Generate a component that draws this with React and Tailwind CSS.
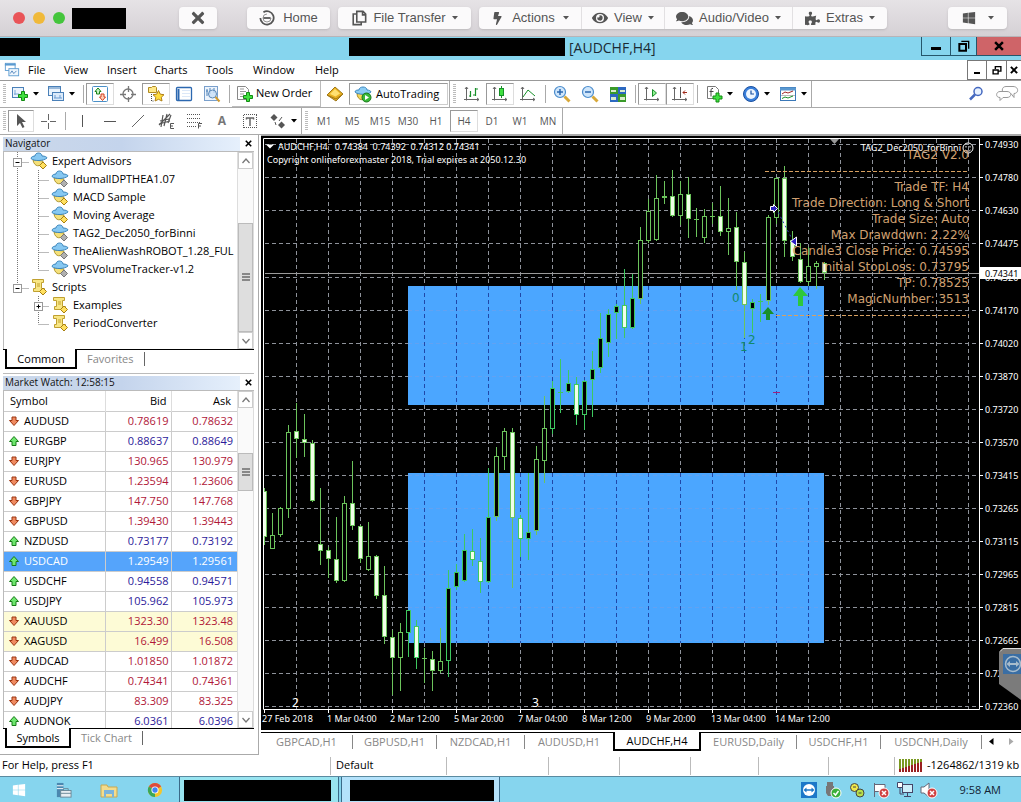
import { FaTimes, FaBolt, FaEye, FaComments, FaPuzzlePiece, FaWindows } from 'react-icons/fa'

// [body top, body bottom, high, low, direction], one every 8px
const CANDLES = [
  [491, 537, 488, 545, 'd'], [535, 549, 513, 549, 'u'], [508, 535, 507, 537, 'u'], [432, 509, 425, 518, 'u'],
  [431, 439, 403, 458, 'd'], [439, 443, 414, 457, 'd'], [443, 501, 440, 502, 'd'], [544, 551, 488, 565, 'd'],
  [550, 559, 547, 578, 'd'], [559, 581, 517, 583, 'd'], [503, 581, 496, 582, 'u'], [503, 526, 461, 530, 'd'],
  [526, 559, 525, 563, 'd'], [556, 570, 522, 571, 'u'], [556, 596, 555, 599, 'd'], [595, 637, 566, 644, 'd'],
  [637, 658, 630, 695, 'd'], [632, 658, 623, 691, 'u'], [610, 633, 610, 657, 'u'], [626, 658, 620, 669, 'd'],
  [658, 659, 648, 683, 'x'], [659, 671, 651, 691, 'd'], [661, 671, 628, 673, 'u'], [588, 661, 570, 677, 'u'],
  [572, 587, 564, 590, 'u'], [550, 581, 534, 582, 'u'], [551, 560, 529, 566, 'd'], [561, 582, 538, 593, 'd'],
  [517, 582, 468, 583, 'u'], [456, 517, 447, 521, 'u'], [431, 457, 428, 470, 'u'], [432, 518, 428, 588, 'd'],
  [518, 539, 515, 557, 'd'], [532, 539, 473, 560, 'u'], [459, 531, 446, 535, 'u'], [428, 461, 396, 483, 'u'],
  [388, 429, 381, 434, 'u'], [392, 394, 359, 413, 'x'], [383, 392, 370, 393, 'u'], [384, 415, 377, 425, 'd'],
  [381, 415, 380, 430, 'u'], [369, 380, 351, 417, 'u'], [338, 368, 313, 373, 'u'], [314, 343, 309, 357, 'u'],
  [306, 313, 304, 339, 'u'], [305, 328, 269, 338, 'd'], [298, 328, 274, 329, 'u'], [240, 299, 227, 304, 'u'],
  [211, 241, 199, 243, 'u'], [198, 240, 175, 241, 'u'], [196, 198, 181, 204, 'u'], [196, 216, 170, 217, 'd'],
  [194, 216, 181, 225, 'u'], [194, 219, 177, 238, 'd'], [219, 220, 208, 237, 'x'], [216, 238, 209, 243, 'u'],
  [216, 217, 203, 224, 'x'], [216, 232, 186, 236, 'd'], [228, 232, 198, 255, 'u'], [227, 262, 212, 290, 'd'],
  [262, 305, 252, 338, 'd'], [302, 309, 299, 333, 'u'], [301, 302, 294, 322, 'x'], [217, 301, 215, 305, 'u'],
  [178, 218, 177, 224, 'u'], [178, 241, 166, 257, 'd'], [240, 257, 231, 261, 'd'], [259, 282, 243, 283, 'd'],
  [266, 282, 247, 286, 'u'], [263, 267, 261, 289, 'u'], [263, 273, 262, 280, 'd'],
]

const PRICES = [
  [144, '0.74930'], [177, '0.74780'], [210, '0.74630'], [243, '0.74475'], [277, '0.74320'], [310, '0.74170'],
  [343, '0.74020'], [376, '0.73870'], [409, '0.73720'], [442, '0.73570'], [475, '0.73415'], [508, '0.73265'],
  [541, '0.73115'], [574, '0.72965'], [607, '0.72815'], [640, '0.72665'], [673, '0.72515'], [706, '0.72360'],
]

const DATES = [
  [262, '27 Feb 2018'], [327, '1 Mar 04:00'], [390, '2 Mar 12:00'], [454, '5 Mar 20:00'], [518, '7 Mar 04:00'],
  [582, '8 Mar 12:00'], [646, '9 Mar 20:00'], [711, '13 Mar 04:00'], [775, '14 Mar 12:00'],
]

const INFO = [
  [159, 'TAG2 V2.0'], [191, 'Trade TF: H4'], [207, 'Trade Direction: Long & Short'], [223, 'Trade Size: Auto'],
  [239, 'Max Drawdown: 2.22%'], [255, 'Candle3 Close Price: 0.74595'], [271, 'Initial StopLoss: 0.73795'],
  [287, 'TP: 0.78525'], [303, 'MagicNumber: 3513'],
]

const QUOTES = [
  ['AUDUSD', '0.78619', '0.78632', 'down'], ['EURGBP', '0.88637', '0.88649', 'up'],
  ['EURJPY', '130.965', '130.979', 'down'], ['EURUSD', '1.23594', '1.23606', 'down'],
  ['GBPJPY', '147.750', '147.768', 'down'], ['GBPUSD', '1.39430', '1.39443', 'down'],
  ['NZDUSD', '0.73177', '0.73192', 'up'], ['USDCAD', '1.29549', '1.29561', 'up'],
  ['USDCHF', '0.94558', '0.94571', 'up'], ['USDJPY', '105.962', '105.973', 'up'],
  ['XAUUSD', '1323.30', '1323.48', 'down'], ['XAGUSD', '16.499', '16.508', 'down'],
  ['AUDCAD', '1.01850', '1.01872', 'down'], ['AUDCHF', '0.74341', '0.74361', 'down'],
  ['AUDJPY', '83.309', '83.325', 'down'], ['AUDNOK', '6.0361', '6.0396', 'up'],
]

const TREE = [
  { label: 'Expert Advisors', level: 0, icon: 'ea', box: '-', first: true },
  { label: 'IdumallDPTHEA1.07', level: 1, icon: 'ea', gray: true, outer: true },
  { label: 'MACD Sample', level: 1, icon: 'ea', outer: true },
  { label: 'Moving Average', level: 1, icon: 'ea', outer: true },
  { label: 'TAG2_Dec2050_forBinni', level: 1, icon: 'ea', gray: true, outer: true },
  { label: 'TheAlienWashROBOT_1.28_FUL', level: 1, icon: 'ea', gray: true, outer: true },
  { label: 'VPSVolumeTracker-v1.2', level: 1, icon: 'ea', gray: true, outer: true, last: true },
  { label: 'Scripts', level: 0, icon: 'script', box: '-', last: true },
  { label: 'Examples', level: 1, icon: 'script', box: '+' },
  { label: 'PeriodConverter', level: 1, icon: 'script', last: true },
]

const Svg = ({ s = 18, children }) => (
  <svg width={s} height={s} viewBox="0 0 18 18" fill="none" className="shrink-0" aria-hidden="true">{children}</svg>
)

const Plus = ({ x, y }) => (
  <path transform={`translate(${x} ${y})`} d="M3.500 .5h3v3h3v3h-3v3h-3v-3h-3v-3h3z" fill="#3fe03f" stroke="#128a12" />
)

const Caret = () => (
  <svg width="6" height="4" viewBox="0 0 6 4" className="shrink-0" aria-hidden="true"><path d="M0 0h6L3 3.500z" fill="currentColor" /></svg>
)

const AxisBase = () => <path d="M3.500 2v13.500M1 14.500h15M2 4l1.500-2L5 4M14 13l2 1.500L14 16" stroke="#666" />

const ICONS = {
  newChart: <><rect x="1.500" y="2.500" width="11" height="10" fill="#eaf3fc" stroke="#4a80b8" /><path d="M4 5v5M3 9h5" stroke="#7aa8d8" /><Plus x={7} y={6} /></>,
  profiles: <><rect x="1.500" y="1.500" width="12" height="9" fill="#eaf3fc" stroke="#4a80b8" /><path d="M1 3h13" stroke="#4a80b8" /><rect x="5.500" y="7.500" width="11" height="8" fill="#dbeafa" stroke="#4a80b8" /><path d="M7 13h8M8 10v3M13 10v3" stroke="#6b9bd0" /></>,
  market: <><rect x="1.500" y="1.500" width="15" height="15" rx="1" fill="#fff" stroke="#4a90c8" /><path d="M7 3l3 3.500H8.500V9h-3V6.500H4z" fill="#c8f5c8" stroke="#168016" /><path d="M11.500 15.500l-3-3.500H10V9h3v3h1.500z" fill="#ffd0b8" stroke="#d04020" /></>,
  cross: <><circle cx="9" cy="9" r="5" stroke="#777" strokeWidth="1.300" /><path d="M9.500 1v6M9.500 12v5M1 9.500h6M12 9.500h5" stroke="#777" strokeWidth="1.300" /></>,
  star: <><path d="M1.500 2.500h3l1-1h3l1 1v5h-8z" fill="#ffe98a" stroke="#b08a20" /><path d="M4.500 9v7h3" stroke="#444" strokeDasharray="1 1" /><path d="M11.500 5.500l1.800 3.700 3.700.5-2.700 2.600.7 3.700-3.500-1.700-3.400 1.700.7-3.700L6 9.700l3.700-.5z" fill="#ffdc3c" stroke="#b08018" /></>,
  terminal: <><rect x="1.500" y="2.500" width="15" height="13" rx="1" fill="#fff" stroke="#2c68b0" strokeWidth="1.300" /><path d="M3.500 4v11" stroke="#2c68b0" strokeWidth="2" /><path d="M7 5.500h8M7 8.500h8M7 11.500h8" stroke="#dce8f8" /></>,
  tester: <><rect x="1.500" y="1.500" width="13" height="14" fill="#edf4fc" stroke="#7aa0cc" /><path d="M4 4v7M3 6h2M7 3v6M11 3v5" stroke="#4a80b8" /><circle cx="9.500" cy="9" r="4" fill="#c8e0f8cc" stroke="#5a88b8" /><path d="M12.500 12l4 4.500" stroke="#d09a30" strokeWidth="2" /></>,
  order: <><path d="M1.500 1.500h8l3 3v10h-11z" fill="#fff" stroke="#888" /><path d="M4 4h4M4 6.500h6M4 9h4M4 11.500h3" stroke="#999" /><Plus x={7} y={7} /></>,
  meta: <><path d="M1 10l8-8 8 7-7 7z" fill="#e8b020" stroke="#a07818" /><path d="M1 10l9 4 7-5" stroke="#a07818" /><path d="M4 9l5-5 5 4.500-4.500 3z" fill="#ffe070" /></>,
  auto: <><path d="M3 8c0 8 8 9 10 2z" fill="#f5d85a" stroke="#a88820" /><path d="M1 7c0-2 3-2 4-2 0-4 8-4 8 0 2 0 4 1 4 2-3 3-13 3-16 0z" fill="#8accf4" stroke="#3c88c0" /><circle cx="12.500" cy="12.500" r="4.500" fill="#38b838" stroke="#187818" /><path d="M11 10l4 2.500-4 2.500z" fill="#fff" /></>,
  bars: <><AxisBase /><path d="M7.500 6v6M7.500 11H6M12.500 3v8M12.500 4H15M12.500 10H10" stroke="#18902a" strokeWidth="1.200" /></>,
  candle: <><AxisBase /><path d="M10.500 1v12" stroke="#18902a" /><rect x="8.500" y="3.500" width="4" height="7" fill="#40e040" stroke="#18902a" /></>,
  line: <><AxisBase /><path d="M4 12l5-7 7 6" stroke="#18902a" /></>,
  zoomIn: <><path d="M11.500 11.500l5 5" stroke="#d8a838" strokeWidth="3" /><circle cx="7" cy="7" r="5.500" fill="#cfe6fb" stroke="#4a8ccc" strokeWidth="1.200" /><path d="M7 4v6M4 7h6" stroke="#2c68b0" strokeWidth="1.500" /></>,
  zoomOut: <><path d="M11.500 11.500l5 5" stroke="#d8a838" strokeWidth="3" /><circle cx="7" cy="7" r="5.500" fill="#cfe6fb" stroke="#4a8ccc" strokeWidth="1.200" /><path d="M4 7h6" stroke="#2c68b0" strokeWidth="1.500" /></>,
  tile: <><path d="M1 2h8v7H1z" fill="#3a9a2a" /><path d="M9 2h8v7H9z" fill="#2c68c0" /><path d="M1 9h8v8H1z" fill="#2c68c0" /><path d="M9 9h8v8H9z" fill="#3a9a2a" /><path d="M2 5h5v2H2zM11 5h5v2h-5zM2 12h5v3H2zM11 12h5v3h-5z" fill="#d8eccc" /></>,
  scroll: <><AxisBase /><path d="M9.500 4.500l4 3.500-4 3.500z" fill="#90f090" stroke="#18902a" /></>,
  shift: <><AxisBase /><path d="M9.500 2v11" stroke="#555" /><path d="M16 7.500h-4M14 5.500l-2 2 2 2" stroke="#a02818" /></>,
  indicator: <><path d="M2.500 1.500h8l3 3v9h-11z" fill="#fff" stroke="#777" /><path d="M8 3.500c-2-.5-2 1-2 3v5M4.500 6.500h4" stroke="#444" /><Plus x={7.500} y={7.500} /></>,
  clock: <><circle cx="9" cy="9" r="7.500" fill="#3a80dc" stroke="#1a50a0" /><circle cx="9" cy="9" r="5" fill="#eef6ff" /><path d="M9 5.500V9h3" stroke="#1a50a0" strokeWidth="1.200" /></>,
  template: <><rect x="1.500" y="2.500" width="15" height="13" fill="#fff" stroke="#3a78b8" /><path d="M1 4h16" stroke="#5a98d0" strokeWidth="3" /><path d="M3 9l3-2 3 1 5-2" stroke="#a02828" /><path d="M2 10.500h14" stroke="#bbb" /><path d="M3 13.500l3-1.500 3 1 5-2" stroke="#18902a" /></>,
  cursor: <path d="M5 2v12l3-3 2.500 5 2-1-2.500-5h4z" fill="#555" />,
  plus: <path d="M9.500 2v6M9.500 11v6M2 9.500h6M11 9.500h6" stroke="#666" />,
  vline: <path d="M9.500 3v12" stroke="#555" />,
  hline: <path d="M3 9.500h12" stroke="#555" />,
  diag: <path d="M3 15L15 3" stroke="#666" />,
  channel: <><path d="M2 13L13 2M3 9l9-2M2 12l11-3M6 3L4 15M10 2L7 14M14 3l-3 8" stroke="#555" strokeWidth="1.200" /><path d="M17 11.500h-3.500v5H17M13.500 14H16" stroke="#555" /></>,
  fibo: <><path d="M2 2.500h14M2 6.500h14M2 10.500h14M2 14.500h9" stroke="#555" strokeDasharray="1 1" /><path d="M17 11.500h-3.500v5M13.500 14H16" stroke="#555" /></>,
  textBox: <><path d="M3 2.500h13M3 15.500h13M2.500 3v13M15.500 3v13" stroke="#555" strokeDasharray="1 1" /><path d="M5 6h8M9 6v8M5.500 5.500v2M12.500 5.500v2" stroke="#666" strokeWidth="1.500" /></>,
  shapes: <><path d="M5 2L1.500 5.500 5 9l3.500-3.500z" fill="#555" /><path d="M12.500 9.500L9 13l3.500 3.500L16 13z" fill="#555" /><path d="M10 9l3-4M6 10l1 3" stroke="#555" /></>,
  search: <><circle cx="11" cy="6.500" r="4" fill="#e8f2ff" stroke="#4468c0" strokeWidth="1.500" /><path d="M8 9.500l-5 5" stroke="#4468c0" strokeWidth="2.500" /></>,
}

const Grip = () => (
  <span className="flex w-2 shrink-0 items-center justify-center">
    <svg width="3" height="20" viewBox="0 0 3 20" aria-hidden="true"><path d="M1.500 0v20" stroke="#bbb" strokeWidth="3" strokeDasharray="1 1" /></svg>
  </span>
)

const Sep = () => <span className="my-1 ml-[3px] mr-0.5 w-px shrink-0 bg-[#aaa]" />

const Tool = ({ icon, label, on, caret, className = 'w-7' }) => (
  <button
    type="button"
    aria-label={label}
    className={`flex shrink-0 items-center justify-center gap-1 border ${on ? 'my-0.5 border-[#999] border-r-[#ddd] border-b-[#ddd]' : 'border-transparent'} ${className}`}
  >
    <Svg>{ICONS[icon]}</Svg>
    {caret && <Caret />}
  </button>
)

const MacBar = () => (
  <header className="flex h-[37px] items-center border-b border-[#b8b4b8] bg-gradient-to-b from-[#e6e3e6] to-[#d5d1d5] font-['Liberation_Sans',sans-serif] text-[13px] text-[#555]">
    <div className="ml-[13px] flex items-center gap-2">
      <span className="size-3 rounded-full bg-[#e95458]" />
      <span className="size-3 rounded-full bg-[#f0b93a]" />
      <span className="size-3 rounded-full bg-[#44c53c]" />
      <span className="-ml-px h-[21px] w-[54px] bg-black" />
    </div>
    <button type="button" aria-label="Close session" className="ml-[53px] flex h-[22px] w-[38px] items-center justify-center rounded bg-[#fbfafb] shadow-sm"><FaTimes size={18} /></button>
    <button type="button" className="ml-[30px] flex h-[22px] w-[83px] items-center justify-center gap-2 rounded bg-[#fbfafb] shadow-sm">
      <Svg s={16}><path d="M5 2.500A7.500 7.500 0 1 1 1.500 9" stroke="#555" strokeWidth="2" /><path d="M9 4.500a4.500 4.500 0 1 0 4.500 4.500" stroke="#888" /><path d="M5 9h8" stroke="#555" strokeWidth="2" /></Svg>
      Home
    </button>
    <button type="button" className="ml-2 flex h-[22px] w-[133px] items-center justify-center gap-1.5 rounded bg-[#fbfafb] shadow-sm">
      <Svg s={16}><path d="M6.500 1.500h7l3 3v9h-10z M13 1.500v4h3.500M6 4.500H2.500v12h9v-3" stroke="#555" strokeWidth="1.800" /></Svg>
      File Transfer <Caret />
    </button>
    <div className="ml-2 flex h-[22px] rounded bg-[#fbfafb] shadow-sm">
      <button type="button" className="flex w-[102px] items-center justify-center gap-2"><FaBolt size={13} />Actions <Caret /></button>
      <button type="button" className="flex w-[83px] items-center justify-center gap-1.5 border-l border-[#e2e0e2]"><FaEye size={16} />View <Caret /></button>
      <button type="button" className="flex w-[128px] items-center justify-center gap-1.5 border-l border-[#e2e0e2]"><FaComments size={17} />Audio/Video <Caret /></button>
      <button type="button" className="flex w-[95px] items-center justify-center gap-1.5 border-l border-[#e2e0e2]"><FaPuzzlePiece size={15} />Extras <Caret /></button>
    </div>
    <button type="button" aria-label="Windows keys" className="ml-auto mr-3.5 flex h-[22px] w-[59px] items-center justify-center gap-3 rounded bg-[#fbfafb] shadow-sm"><FaWindows size={14} /><Caret /></button>
  </header>
)

const TitleBar = () => (
  <div className="flex h-[23px] bg-[#86d5ee]">
    <span className="mt-px h-[18px] w-10 bg-black" />
    <div className="flex flex-1 items-start pl-[309px]">
      <span className="mt-px h-[18px] w-[216px] bg-black" />
      <h1 className="ml-1 mt-px text-sm leading-5 text-[#1a2a33]">[AUDCHF,H4]</h1>
    </div>
    <div className="flex h-[19px] border-b border-l border-[#25566b]">
      <button type="button" aria-label="Minimize" className="flex w-7 items-center justify-center"><span className="mt-1 h-[3px] w-2.5 bg-black" /></button>
      <button type="button" aria-label="Restore" className="flex w-[26px] items-center justify-center border-l border-[#25566b]">
        <Svg s={12}><path d="M2 6h10v10H2z" stroke="#000" strokeWidth="3" /><path d="M5 2h11v11" stroke="#000" strokeWidth="2" /></Svg>
      </button>
      <button type="button" aria-label="Close" className="flex w-[45px] items-center justify-center border-l border-[#25566b] bg-[#cf6468]">
        <Svg s={10}><path d="M2 2l14 14M16 2L2 16" stroke="#000" strokeWidth="4.500" /></Svg>
      </button>
    </div>
  </div>
)

const MenuBar = () => (
  <nav className="flex h-[21px] items-center border-b border-[#999] bg-white pl-1">
    <Svg s={16}><rect x="1.500" y="1.500" width="11" height="8" fill="#fff" stroke="#5a9ad0" /><path d="M1 3h12" stroke="#5a9ad0" strokeWidth="2" /><rect x="5.500" y="7.500" width="11" height="8" fill="#eef6fd" stroke="#5a9ad0" /><path d="M7 13l2-3 2 3 3-3" stroke="#4a80b8" /></Svg>
    <div className="flex flex-1 text-[11px] leading-5">
      <a href="#file" className="w-[44px] pl-2">File</a>
      <a href="#view" className="w-[43px]">View</a>
      <a href="#insert" className="w-[47px]">Insert</a>
      <a href="#charts" className="w-[52px]">Charts</a>
      <a href="#tools" className="w-[47px]">Tools</a>
      <a href="#window" className="w-[62px]">Window</a>
      <a href="#help">Help</a>
    </div>
    <div className="flex h-full">
      <button type="button" aria-label="Minimize chart" className="flex w-5 items-center justify-center border border-[#777]"><span className="mt-1.5 h-0.5 w-1.5 bg-black" /></button>
      <button type="button" aria-label="Restore chart" className="flex w-5 items-center justify-center border-y border-r border-[#777]">
        <Svg s={10}><path d="M2 9h9v7H2zM6 7V3h10v8h-4" stroke="#000" strokeWidth="2.500" /></Svg>
      </button>
      <button type="button" aria-label="Close chart" className="flex w-[14px] items-center justify-center border-y border-[#777]">
        <Svg s={8}><path d="M2 2l14 14M16 2L2 16" stroke="#000" strokeWidth="4.500" /></Svg>
      </button>
    </div>
  </nav>
)

const MainToolbar = () => (
  <div className="flex h-[27px] border-b border-[#aaa] bg-white">
    <Grip />
    <Tool icon="newChart" label="New chart" caret className="w-[34px]" />
    <Tool icon="profiles" label="Profiles" caret className="w-[38px]" />
    <Sep />
    <Tool icon="market" label="Market Watch" on />
    <Tool icon="cross" label="Data Window" />
    <Tool icon="star" label="Navigator" on />
    <Tool icon="terminal" label="Terminal" />
    <Tool icon="tester" label="Strategy Tester" />
    <Sep />
    <button type="button" className="flex w-[89px] shrink-0 items-center gap-0.5 border-r border-b border-[#bbb] pl-1 text-[11px]"><Svg>{ICONS.order}</Svg><span>New Order</span></button>
    <Tool icon="meta" label="MetaEditor" />
    <button type="button" className="my-0.5 flex w-[99px] shrink-0 items-center gap-1 border border-[#999] border-r-[#ccc] border-b-[#ccc] pl-1 text-[11px]"><Svg>{ICONS.auto}</Svg><span>AutoTrading</span></button>
    <span className="ml-px w-px shrink-0 bg-[#aaa]" />
    <Grip />
    <Tool icon="bars" label="Bar Chart" />
    <Tool icon="candle" label="Candlesticks" on />
    <Tool icon="line" label="Line Chart" />
    <Sep />
    <Tool icon="zoomIn" label="Zoom In" />
    <Tool icon="zoomOut" label="Zoom Out" />
    <Tool icon="tile" label="Tile Windows" />
    <Sep />
    <Tool icon="scroll" label="Auto Scroll" on />
    <Tool icon="shift" label="Chart Shift" on />
    <Sep />
    <Tool icon="indicator" label="Indicators" caret className="w-[37px]" />
    <Tool icon="clock" label="Periods" caret className="w-[37px]" />
    <Tool icon="template" label="Templates" caret className="w-[37px]" />
    <span className="w-px shrink-0 bg-[#aaa]" />
    <div className="ml-auto flex items-center gap-2.5 pr-0.5">
      <button type="button" aria-label="Search"><Svg>{ICONS.search}</Svg></button>
      <button type="button" aria-label="Chat">
        <svg width="24" height="18" viewBox="0 0 24 18" fill="#fff" stroke="#999" aria-hidden="true"><path d="M11 1.500h7c6 0 6 7 1 7v4l-3-4h-5c-5 0-5-7 0-7z" /><path d="M5 6.500h7c5 0 5 6 0 6H8l-3 3v-3c-5 0-4-6 0-6z" /></svg>
      </button>
    </div>
  </div>
)

const PERIODS = ['M1', 'M5', 'M15', 'M30', 'H1', 'H4', 'D1', 'W1', 'MN']

const DrawToolbar = () => (
  <div className="flex h-[27px] border-b border-[#aaa] bg-white">
    <Grip />
    <Tool icon="cursor" label="Cursor" on className="w-[26px]" />
    <Tool icon="plus" label="Crosshair" />
    <Sep />
    <Tool icon="vline" label="Vertical line" />
    <Tool icon="hline" label="Horizontal line" />
    <Tool icon="diag" label="Trendline" />
    <Tool icon="channel" label="Equidistant channel" />
    <Tool icon="fibo" label="Fibonacci" />
    <button type="button" className="w-7 shrink-0 text-xs font-bold text-[#777]">A</button>
    <Tool icon="textBox" label="Text label" />
    <Tool icon="shapes" label="Arrows" caret className="w-[37px]" />
    <span className="w-px shrink-0 bg-[#aaa]" />
    <Grip />
    {PERIODS.map((p) => (
      <button key={p} type="button" className={`w-7 shrink-0 border text-[10px] text-[#555] ${p === 'H4' ? 'my-0.5 border-[#999] border-r-[#ddd] border-b-[#ddd]' : 'border-transparent'}`}>{p}</button>
    ))}
    <span className="w-px shrink-0 bg-[#aaa]" />
  </div>
)

const TreeIcon = ({ type, gray }) => (
  <Svg>
    {type === 'ea' ? (
      <>
        <path d="M3 8c1 7 8 8 10 1z" fill="#f5e07a" stroke="#b09830" />
        <path d="M1 6.500c0-2 3-2.500 4-2.500 0-4 7-4 7 0 3 0 5 1 5 2-3 3-13 3.500-16 .5z" fill="#86c8f2" stroke="#3c86bc" />
      </>
    ) : (
      <path d="M2.500 1.500h11v3h-2v6h3v3h-11v-3h2v-6h-3z M7 6h3M7 8h3" fill="#f8e684" stroke="#c0a030" />
    )}
    <path d="M13 10l3.500 3.500L13 17l-3.500-3.500z" fill={gray ? '#b0b0b0' : '#ffe060'} stroke={gray ? '#777' : '#a88010'} />
  </Svg>
)

const TreeLines = ({ node }) => {
  const x = node.level ? 34.5 : 13.5
  const end = node.level ? 45 : 25
  const width = node.level ? 47 : 26
  return (
    <svg width={width} height="18" viewBox={`0 0 ${width} 18`} fill="none" className="shrink-0" aria-hidden="true">
      <g stroke="#777" strokeDasharray="1 1">
        {node.outer && <path d="M13.500 0v18" />}
        <path d={`M${x} 0v${node.last ? 10 : 18}`} />
        <path d={`M${x} 10.500H${end}`} />
      </g>
      {node.box && (
        <>
          <rect x={x - 4} y="6.500" width="8" height="8" fill="#fff" stroke="#999" />
          <path d={`M${x - 2} 10.500h4`} stroke="#000" />
          {node.box === '+' && <path d={`M${x} 8.500v4`} stroke="#000" />}
        </>
      )}
    </svg>
  )
}

const PanelHeader = ({ title }) => (
  <div className="flex h-[15px] items-center">
    <h2 className="h-[14px] flex-1 bg-gradient-to-r from-[#cbd8ea] via-[#c4d4ec] to-[#e6f0fc] pl-0.5 text-[10px] leading-[13px] text-[#111]">{title}</h2>
    <button type="button" aria-label={`Close ${title}`} className="flex w-3 justify-end"><Svg s={7}><path d="M2 2l14 14M16 2L2 16" stroke="#000" strokeWidth="4" /></Svg></button>
    <span className="w-0.5" />
  </div>
)

const Chevron = ({ up }) => (
  <button type="button" aria-label={up ? 'Scroll up' : 'Scroll down'} className="flex h-[17px] shrink-0 items-center justify-center border border-[#ccc] bg-white">
    <svg width="8" height="6" viewBox="0 0 8 6" fill="none" aria-hidden="true"><path d={up ? 'M.5 5L4 1l3.500 4' : 'M.5 1L4 5l3.500-4'} stroke="#777" strokeWidth="1.300" /></svg>
  </button>
)

const ScrollBar = ({ before, thumb }) => (
  <div className="flex w-[17px] shrink-0 flex-col border-x border-[#ddd] bg-[#fafafa]">
    <Chevron up />
    <span className={before} />
    <span className={`flex flex-col items-center justify-center gap-px border border-[#bbb] bg-[#dedede] ${thumb}`}>
      <i className="h-0.5 w-2 bg-[#888]" /><i className="h-0.5 w-2 bg-[#888]" /><i className="h-0.5 w-2 bg-[#888]" />
    </span>
    <span className="flex-1" />
    <Chevron />
  </div>
)

const PanelTabs = ({ active, other, width }) => (
  <div className="flex h-5 text-[11px] leading-[17px]">
    <span className="w-0.5 border-t border-black" />
    <button type="button" className={`border-x-2 border-b-2 border-black text-center ${width}`}>{active}</button>
    <span className="flex flex-1 items-start border-t border-black text-[#888]">
      <button type="button" className="px-2.5">{other}</button>
      <i className="mt-0.5 h-3.5 w-px bg-[#666]" />
    </span>
  </div>
)

const Navigator = () => (
  <section className="pt-px">
    <PanelHeader title="Navigator" />
    <div className="flex h-[198px] border-l border-t border-[#bbb] bg-white">
      <ul className="min-w-0 flex-1 overflow-hidden">
        {TREE.map((node) => (
          <li key={node.label} className="flex h-[18px] items-center whitespace-nowrap text-[11px]">
            <TreeLines node={node} />
            <TreeIcon type={node.icon} gray={node.gray} />
            <span className="pl-1">{node.label}</span>
          </li>
        ))}
      </ul>
      <ScrollBar before="h-[54px]" thumb="h-[110px]" />
    </div>
    <PanelTabs active="Common" other="Favorites" width="w-[72px]" />
  </section>
)

const QuoteArrow = ({ dir }) => (
  <svg width="12" height="12" viewBox="0 0 12 12" className="shrink-0" aria-hidden="true">
    {dir === 'up'
      ? <path d="M6 1.500l4.500 5h-2.500v4H4v-4H1.500z" fill="#6fe86f" stroke="#187a18" />
      : <path d="M6 10.500l4.500-5h-2.500v-3.500H4v3.500H1.500z" fill="#f08a60" stroke="#9a3410" />}
  </svg>
)

const quoteColor = (sym, dir) => {
  if (sym === 'USDCAD') return 'text-white'
  return dir === 'up' ? 'text-[#2c1a9a]' : 'text-[#b01838]'
}

const rowColor = (sym) => {
  if (sym === 'USDCAD') return 'bg-[#55a4fb] text-white'
  return sym.startsWith('X') ? 'bg-[#fdfbd6]' : 'bg-white'
}

const MarketWatch = () => (
  <section className="mt-1 flex flex-1 flex-col border-t border-[#bbb] pt-px">
    <PanelHeader title="Market Watch: 12:58:15" />
    <div className="flex h-0 grow overflow-hidden border-l border-t border-[#bbb] bg-white">
      <div className="min-w-0 flex-1 overflow-hidden">
        <table className="w-full table-fixed border-collapse text-[11px]">
          <thead>
            <tr className="h-5 border-b border-[#ccc]">
              <th className="w-[101px] border-r border-[#ddd] pl-1.5 text-left font-normal">Symbol</th>
              <th className="w-[66px] border-r border-[#ddd] pr-1 text-right font-normal">Bid</th>
              <th className="pr-1.5 text-right font-normal">Ask</th>
            </tr>
          </thead>
          <tbody>
            {QUOTES.map(([sym, bid, ask, dir]) => (
              <tr key={sym} className={`h-5 border-b border-[#ccc] ${rowColor(sym)}`}>
                <td className="border-r border-[#ccc] pl-1"><span className="flex items-center gap-1"><QuoteArrow dir={dir} />{sym}</span></td>
                <td className={`border-r border-[#ccc] pr-0.5 text-right ${quoteColor(sym, dir)}`}>{bid}</td>
                <td className={`pr-1 text-right ${quoteColor(sym, dir)}`}>{ask}</td>
              </tr>
            ))}
          </tbody>
        </table>
      </div>
      <ScrollBar before="h-[45px]" thumb="h-[38px]" />
    </div>
    <PanelTabs active="Symbols" other="Tick Chart" width="w-[66px]" />
  </section>
)

const Candle = ({ x, data: [top, bottom, high, low, dir] }) => {
  const onBlue = x >= 408 && ((top > 286 && top < 405) || (top > 473 && top < 643))
  const green = onBlue ? '#3ec860' : '#6cc45c'
  return (
    <g stroke={green}>
      <path d={`M${x + 0.5} ${high}V${low}`} />
      {dir === 'x'
        ? <path d={`M${x - 2} ${top + 0.5}h5`} />
        : <rect x={x - 1.5} y={top + 0.5} width="4" height={Math.max(bottom - top - 1, 1)} fill={dir === 'd' ? '#f0ffe8' : '#000'} />}
    </g>
  )
}

const VERTICALS = Array.from({ length: 22 }, (_, i) => 296 + i * 32)

const Chart = () => (
  <svg viewBox="261 136 760 594" className="block h-auto w-full bg-black" fill="none" role="img" aria-label="AUDCHF H4 candlestick chart">
    <g strokeDasharray="4 3" stroke="#8e929a">
      {PRICES.map(([y]) => <path key={y} d={`M265 ${y + 0.5}H979`} />)}
      {VERTICALS.map((x) => <path key={x} d={`M${x + 0.5} 139V709`} />)}
    </g>
    {/* the zones cover the grid, which shows through in blue */}
    <g fill="#4ba6ff">
      <rect x="408" y="286" width="416" height="119" />
      <rect x="408" y="473" width="416" height="170" />
    </g>
    <g strokeDasharray="4 3">
      {PRICES.filter(([y]) => (y > 286 && y < 405) || (y > 473 && y < 643)).map(([y]) => <path key={y} d={`M408 ${y + 0.5}H824`} stroke="#62a2f2" />)}
      {VERTICALS.filter((x) => x > 408 && x < 824).map((x) => <path key={x} d={`M${x + 0.5} 286V405M${x + 0.5} 473V643`} stroke="#2048a8" />)}
    </g>
    <path d="M265 273.500H979" stroke="#9a9a9a" />
    {CANDLES.map((c, i) => <Candle key={i} x={264 + i * 8} data={c} />)}
    <path d="M261 136h3v594h-3z" fill="#000" />
    <path d="M263.500 709.500V138.500H979.500V709.500z" stroke="#fff" />
    <path d="M765 171.500H969M776 315.500H969" stroke="#d8a060" strokeDasharray="4 2" />

    {/* trade marks */}
    <path d="M776 208l17 33" stroke="#3040c0" strokeDasharray="2 3" />
    <path d="M770.500 206.500h3v-2l4 4-4 4v-2h-3z" fill="#2a20c0" stroke="#fff" />
    <path d="M796.500 237v9l-6-4.500z" fill="#2a20c0" stroke="#fff" />
    <path d="M768 307l6 7h-4v6h-4v-6h-4z" fill="#189028" />
    <path d="M800 287l8 9h-5v10h-5v-10h-5z" fill="#2ec83c" />
    <path d="M773 392.500h7" stroke="#a02080" />
    <path d="M830 139h9l-4.500 5z" fill="#999" />
    <g fill="#128a6a" fontFamily="DejaVu Sans, sans-serif" fontSize="12">
      <text x="732" y="302">0</text><text x="740" y="351">1</text><text x="748" y="344">2</text>
    </g>

    <g fill="#fff" fontFamily="Noto Sans, sans-serif" fontSize="9">
      <path d="M266 144.500h8l-4 4z" />
      <text x="278" y="150">AUDCHF,H4&nbsp;&nbsp; 0.74384&nbsp; 0.74392&nbsp; 0.74312 0.74341</text>
      <text x="267" y="163">Copyright onlineforexmaster 2018, Trial expires at 2050.12.30</text>
      <text x="961" y="151" textAnchor="end">TAG2_Dec2050_forBinni</text>
      {PRICES.map(([y, p]) => <text key={p} x="985" y={y + 4}>{p}</text>)}
      {DATES.map(([x, d]) => <text key={d} x={x} y="722">{d}</text>)}
      <text x="292" y="707" fontSize="12">2</text>
      <text x="532" y="707" fontSize="12">3</text>
    </g>
    <g stroke="#fff">
      {PRICES.map(([y]) => <path key={y} d={`M980 ${y + 0.5}h3`} />)}
      {DATES.map(([, d], i) => <path key={d} d={`M${264.5 + i * 64} 710v3`} />)}
      <circle cx="968" cy="148" r="5" />
      <path d="M966 146v1.500M970 146v1.500M965.500 150c1 1.500 4 1.500 5 0" />
    </g>
    <g fill="#d0a070" fontFamily="DejaVu Sans, sans-serif" fontSize="12" textAnchor="end">
      {INFO.map(([y, t]) => <text key={t} x="969" y={y}>{t}</text>)}
    </g>
    <rect x="980" y="267" width="41" height="12" fill="#fff" />
    <text x="985" y="277" fill="#000" fontFamily="Noto Sans, sans-serif" fontSize="9">0.74341</text>

    {/* side handle */}
    <path d="M1021 648h-18l-4 4v32l22 16z" fill="#7b7b7b" />
    <path d="M1021 648.500h-18l-3 3" stroke="#ddd" />
    <path d="M1003 654h18v20h-18z" fill="#3a6ea4" />
    <circle cx="1013" cy="664" r="7.500" stroke="#a8bccc" strokeWidth="1.500" />
    <path d="M1006.500 664l3.500-3v2h6v-2l3.500 3-3.500 3v-2h-6v2z" fill="#a8bccc" />
  </svg>
)

const TABS = [
  ['GBPCAD,H1', 'w-[92px]'], ['GBPUSD,H1', 'w-[84px]'], ['NZDCAD,H1', 'w-[88px]'], ['AUDUSD,H1', 'w-[88px]'],
  ['AUDCHF,H4', 'w-[88px]'], ['EURUSD,Daily', 'w-[96px]'], ['USDCHF,H1', 'w-[84px]'], ['USDCNH,Daily', 'w-[101px]'],
]

const ChartTabs = () => (
  <div className="mt-0.5 flex h-[19px] text-[11px] leading-[17px]">
    {TABS.map(([name, width]) =>
      name === 'AUDCHF,H4' ? (
        <button key={name} type="button" className={`shrink-0 border-x-2 border-b-2 border-black ${width}`}>{name}</button>
      ) : (
        <span key={name} className={`flex shrink-0 items-start border-t border-black text-[#888] ${width}`}>
          <button type="button" className="flex-1">{name}</button>
          {name !== 'AUDUSD,H1' && <i className="mt-0.5 h-3.5 w-px bg-[#888]" />}
        </span>
      ),
    )}
    <span className="flex flex-1 items-center justify-around border-t border-black">
      <button type="button" aria-label="Previous tabs"><svg width="5" height="8" aria-hidden="true"><path d="M4.500 0v7L0 3.500z" fill="#000" /></svg></button>
      <button type="button" aria-label="Next tabs"><svg width="5" height="8" aria-hidden="true"><path d="M0 0v7l4.500-3.500z" fill="#aaa" /></svg></button>
    </span>
  </div>
)

const StatusBar = () => (
  <footer className="flex h-[21px] items-center bg-white text-[11px]">
    <span className="w-[330px] pl-0.5">For Help, press F1</span>
    <span className="h-[18px] w-[116px] border-l border-[#bbb] pl-[5px]">Default</span>
    <span className="h-[18px] w-[102px] border-l border-[#bbb]" />
    <span className="h-[18px] w-[71px] border-l border-[#bbb]" />
    <span className="h-[18px] w-[71px] border-l border-[#bbb]" />
    <span className="h-[18px] w-[68px] border-l border-[#bbb]" />
    <span className="h-[18px] w-[70px] border-l border-[#bbb]" />
    <span className="h-[18px] w-[66px] border-l border-[#bbb]" />
    <span className="flex h-[18px] flex-1 items-center gap-1 whitespace-nowrap border-l border-[#bbb] pl-1">
      <svg width="24" height="13" viewBox="0 0 24 13" className="shrink-0" aria-hidden="true">
        {[0, 1, 2, 3, 4, 5, 6, 7].map((i) => (
          <g key={i}><rect x={i * 3} y="0" width="2" height={10 - i} fill="#7a9a20" /><rect x={i * 3} y={10 - i} width="2" height={3 + i} fill="#9a2020" /></g>
        ))}
      </svg>
      -1264862/1319 kb
    </span>
  </footer>
)

const Taskbar = () => (
  <div className="flex h-[27px] items-center border-t border-[#5a8aa0] bg-[#86d5ee]">
    <div className="flex w-[179px] shrink-0 items-center justify-between pl-3 pr-4">
      <button type="button" aria-label="Start" className="text-white"><FaWindows size={14} /></button>
      <button type="button" aria-label="Server Manager"><Svg s={17}><path d="M2 1h7v15H2z" fill="#4a88b0" /><path d="M2 4h7M2 7h7" stroke="#fff" /><rect x="6" y="9" width="11" height="7" fill="#e8eef2" stroke="#6a8898" /><path d="M9 9V7h5v2M6 12h11" stroke="#6a8898" /></Svg></button>
      <button type="button" aria-label="Explorer"><Svg><path d="M1 4h6l1 2h9v10H1z" fill="#f3dc8c" stroke="#c8a850" /><path d="M4 9h10v7h-2v-3H6v3H4z" fill="#7ab4dc" /></Svg></button>
      <button type="button" aria-label="Chrome">
        <Svg s={16}>
          <circle cx="9" cy="9" r="8" fill="#f2c52c" />
          <path d="M9 9L2.070 5A8 8 0 0 1 15.930 5z" fill="#dd4b3e" />
          <path d="M9 9v8A8 8 0 0 1 2.070 5z" fill="#3aa757" />
          <circle cx="9" cy="9" r="4" fill="#fff" /><circle cx="9" cy="9" r="3" fill="#4285f4" />
        </Svg>
      </button>
    </div>
    <button type="button" aria-label="Task 1" className="flex h-full w-[160px] shrink-0 items-center border-x border-[#3a6a88] bg-[#98e4f0] pl-1"><span className="h-[21px] w-[147px] bg-black" /></button>
    <button type="button" aria-label="Task 2" className="ml-0.5 flex h-full w-[159px] shrink-0 items-center border-x border-[#3a6a88] bg-[#b4e2fb] pl-2"><span className="h-[21px] w-[144px] bg-black" /></button>
    <div className="ml-auto flex items-center gap-1.5 pr-5">
      <Svg><rect x="1" y="1" width="16" height="16" fill="#1c78c8" /><circle cx="9" cy="9" r="6" fill="#fff" /><path d="M3.500 9l3-2.500v1.800h5V6.500l3 2.500-3 2.500V9.700h-5v1.800z" fill="#1c78c8" /></Svg>
      <Svg><path d="M3 1h6v4H3zM2 5h8v7l-2 3H4l-2-3z" fill="#777" /><circle cx="12" cy="12" r="5" fill="#3ab03a" stroke="#fff" /><path d="M9.500 12l2 2 3-4" stroke="#fff" strokeWidth="1.500" /></Svg>
      <Svg><circle cx="6.500" cy="6.500" r="4" fill="#f0e84a" stroke="#444" /><circle cx="12" cy="12" r="4" fill="#b8e04a" stroke="#444" /><path d="M5 6h3M10.500 12h3" stroke="#444" /></Svg>
      <Svg><path d="M3 3.500h10v7H3" fill="#fff" stroke="#667" /><path d="M2.500 2v14" stroke="#667" /><circle cx="12" cy="12" r="5" fill="#d04040" stroke="#fff" /><path d="M10 10l4 4M14 10l-4 4" stroke="#fff" strokeWidth="1.500" /></Svg>
      <Svg><rect x="6.500" y="3.500" width="10" height="8" fill="#cdeefa" stroke="#446" /><path d="M11.500 12v3M8 15.500h7" stroke="#446" /><path d="M1.500 1.500h5v5h-5z" fill="#fff" stroke="#446" /><path d="M4 7v6h4" stroke="#446" /></Svg>
      <Svg><path d="M1 6h3l5-4v14l-5-4H1z" fill="#fff" stroke="#667" /><circle cx="12" cy="12" r="5" fill="#d04040" stroke="#fff" /><path d="M10 10l4 4M14 10l-4 4" stroke="#fff" strokeWidth="1.500" /></Svg>
      <time className="pl-4 text-[11px] text-[#123]">9:58 AM</time>
    </div>
  </div>
)

const App = () => {

  return (
    <div className="flex min-h-screen flex-col overflow-hidden bg-white font-['Open_Sans','Noto_Sans',sans-serif] text-black">
      <MacBar />
      <TitleBar />
      <MenuBar />
      <MainToolbar />
      <DrawToolbar />

      {/* Panels and chart */}
      <main className="flex">
        <aside className="flex w-[259px] shrink-0 flex-col border-b border-r border-[#aaa] pb-1.5 pl-[3px] pr-1">
          <Navigator />
          <MarketWatch />
        </aside>
        <div className="ml-0.5 min-w-0 flex-1 border-t border-[#aaa] pb-1">
          <Chart />
          <ChartTabs />
        </div>
      </main>

      <StatusBar />
      <Taskbar />
    </div>
  )
}

export default App
